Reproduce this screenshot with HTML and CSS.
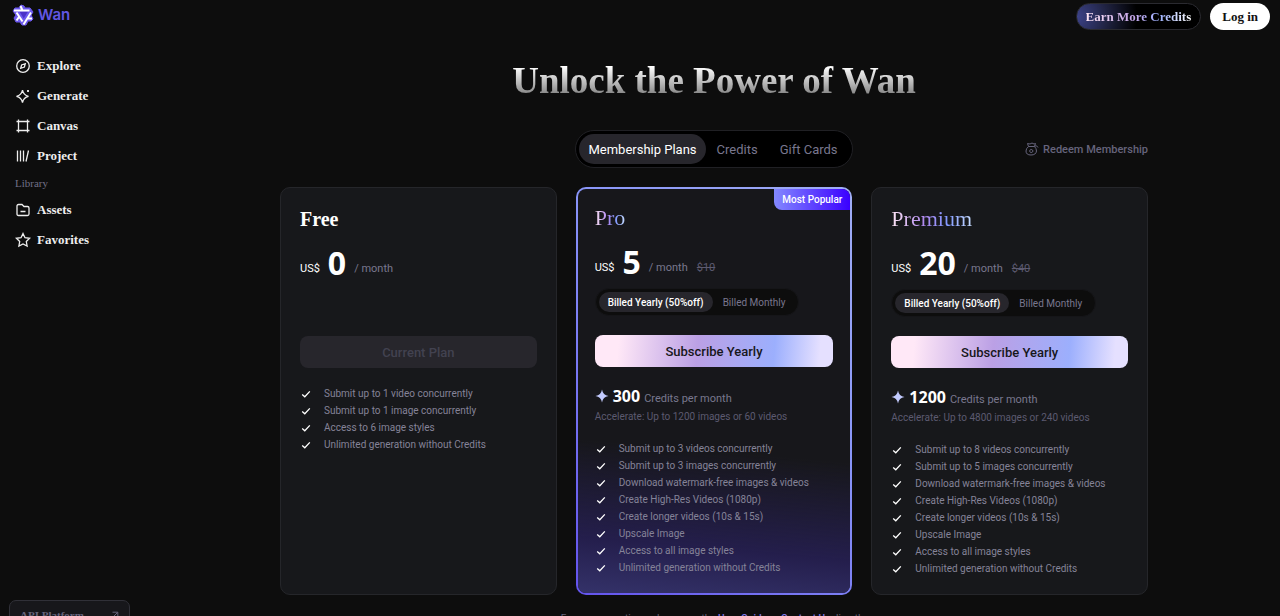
FILE: index.html
```html
<!DOCTYPE html>
<html lang="en">
<head>
    <meta charset="UTF-8">
    <meta name="viewport" content="width=device-width, initial-scale=1.0">
    <title>Wan - Membership</title>
    <link rel="stylesheet" href="styles.css">
</head>
<body>
    <!-- shared icons -->
    <svg class="defs" width="0" height="0">
        <symbol id="check" viewBox="0 0 12 12"><path d="M2.2 6.4 4.8 8.8 9.8 3.4" fill="none" stroke="#fff" stroke-width="1.3"/></symbol>
        <symbol id="spark" viewBox="0 0 14 14"><path d="M7 .5Q7.9 6.1 13.5 7 7.9 7.9 7 13.5 6.1 7.9.5 7 6.1 6.1 7 .5Z" fill="#c3cbff"/></symbol>
    </svg>
    <div class="app">
        <aside class="sidebar">
            <a class="logo" href="#">
                <svg width="24" height="24" viewBox="0 0 24 24" fill="none" stroke-linejoin="round">
                    <path d="M8 5 10 2 13 3 14 5 19 5 22 9 20 12 22 16 20 18 17 18 15 22 11 22 9 19 5 19 3 15 5 12 2 8 4 5Z" fill="#6d59ee" stroke="#6d59ee"/>
                    <path d="M8.500 8.500H17L12.700 15.500Z" fill="#4b32c8"/>
                    <path d="M3 7.500H18.500M9.500 3 11.500 7.500M20 9.500 12.500 21.500M21 15.500H16.500M5.500 9.500 11.500 18.500M5.500 17.500 8 14" stroke="#fff" stroke-width="2"/>
                </svg>
                <span>Wan</span>
            </a>
            <nav class="nav">
                <a href="#">
                    <svg viewBox="0 0 16 16"><circle cx="8" cy="8" r="6.300"/><path d="M10.300 5.700 9.400 9 5.700 10.300 6.600 7Z"/></svg>
                    Explore
                </a>
                <a href="#">
                    <svg viewBox="0 0 16 16"><path d="M7.500 2Q8.500 7.200 13.500 8.300 8.500 9.400 7.500 14.500 6.500 9.400 1.500 8.300 6.500 7.200 7.500 2ZM13 2V4M12 3H14"/></svg>
                    Generate
                </a>
                <a href="#">
                    <svg viewBox="0 0 16 16"><path d="M3.500 1.500V14.500M12.500 1.500V14.500M1.500 3.500H14.500M1.500 12.500H14.500"/></svg>
                    Canvas
                </a>
                <a href="#">
                    <svg viewBox="0 0 16 16"><path d="M2.500 2.500V13.500M5.500 2.500V13.500M8.500 2.500V13.500M13.500 2.500 11 13.500"/></svg>
                    Project
                </a>
                <h2>Library</h2>
                <a href="#">
                    <svg viewBox="0 0 16 16"><path d="M2 4Q2 2.500 3.500 2.500H7L9 4.500H12.500Q14 4.500 14 6V12Q14 13.500 12.500 13.500H3.500Q2 13.500 2 12ZM5.500 9.500H10.500"/></svg>
                    Assets
                </a>
                <a href="#">
                    <svg viewBox="0 0 16 16"><path d="M8 1.600 10 5.700 14.600 6.300 11.300 9.500 12.100 14 8 11.900 3.900 14 4.700 9.500 1.400 6.300 6 5.700Z"/></svg>
                    Favorites
                </a>
            </nav>
            <a class="api" href="#">
                API Platform
                <svg width="8" height="8" viewBox="0 0 8 8"><path d="M1 7 6.500 1.500M1.500 1.200H6.800V6.500" fill="none" stroke="currentColor"/></svg>
            </a>
        </aside>

        <main class="main">
            <header class="topbar">
                <button class="earn"><span>Earn More Credits</span></button>
                <button class="login">Log in</button>
            </header>

            <div class="content">
                <h1>Unlock the Power of Wan</h1>
                <div class="toolbar">
                    <div class="tabs">
                        <button class="active">Membership Plans</button>
                        <button>Credits</button>
                        <button>Gift Cards</button>
                    </div>
                    <a class="redeem" href="#">
                        <svg width="14" height="14" viewBox="0 0 14 14" fill="none" stroke="currentColor"><path d="M3.500 4.500Q1 6.500 1 9 1 13 6 13T11.500 9Q11.500 6.500 9.500 4.500ZM3.500 4.500 2.500 1.500 5 2 7 1 9 2 10.500 1.500 9.500 4.500M9.500 4Q12 3 13 5.500M6.300 7 8.200 9 6.300 11 4.400 9Z"/></svg>
                        Redeem Membership
                    </a>
                </div>

                <div class="plans">
                    <section class="card">
                        <h3>Free</h3>
                        <p class="price"><span>US$</span><strong>0</strong><em>/ month</em></p>
                        <div class="billing_empty"></div>
                        <button class="subscribe" disabled>Current Plan</button>
                        <ul>
                            <li><svg><use href="#check"/></svg>Submit up to 1 video concurrently</li>
                            <li><svg><use href="#check"/></svg>Submit up to 1 image concurrently</li>
                            <li><svg><use href="#check"/></svg>Access to 6 image styles</li>
                            <li><svg><use href="#check"/></svg>Unlimited generation without Credits</li>
                        </ul>
                    </section>

                    <section class="card pro">
                        <span class="badge">Most Popular</span>
                        <h3><span class="tint">Pro</span></h3>
                        <p class="price"><span>US$</span><strong>5</strong><em>/ month</em><del>$10</del></p>
                        <div class="billing">
                            <button class="active">Billed Yearly (50%off)</button>
                            <button>Billed Monthly</button>
                        </div>
                        <button class="subscribe">Subscribe Yearly</button>
                        <p class="credits"><svg><use href="#spark"/></svg><strong>300</strong>Credits per month</p>
                        <p class="accelerate">Accelerate: Up to 1200 images or 60 videos</p>
                        <ul>
                            <li><svg><use href="#check"/></svg>Submit up to 3 videos concurrently</li>
                            <li><svg><use href="#check"/></svg>Submit up to 3 images concurrently</li>
                            <li><svg><use href="#check"/></svg>Download watermark-free images &amp; videos</li>
                            <li><svg><use href="#check"/></svg>Create High-Res Videos (1080p)</li>
                            <li><svg><use href="#check"/></svg>Create longer videos (10s &amp; 15s)</li>
                            <li><svg><use href="#check"/></svg>Upscale Image</li>
                            <li><svg><use href="#check"/></svg>Access to all image styles</li>
                            <li><svg><use href="#check"/></svg>Unlimited generation without Credits</li>
                        </ul>
                    </section>

                    <section class="card">
                        <h3><span class="tint">Premium</span></h3>
                        <p class="price"><span>US$</span><strong>20</strong><em>/ month</em><del>$40</del></p>
                        <div class="billing">
                            <button class="active">Billed Yearly (50%off)</button>
                            <button>Billed Monthly</button>
                        </div>
                        <button class="subscribe">Subscribe Yearly</button>
                        <p class="credits"><svg><use href="#spark"/></svg><strong>1200</strong>Credits per month</p>
                        <p class="accelerate">Accelerate: Up to 4800 images or 240 videos</p>
                        <ul>
                            <li><svg><use href="#check"/></svg>Submit up to 8 videos concurrently</li>
                            <li><svg><use href="#check"/></svg>Submit up to 5 images concurrently</li>
                            <li><svg><use href="#check"/></svg>Download watermark-free images &amp; videos</li>
                            <li><svg><use href="#check"/></svg>Create High-Res Videos (1080p)</li>
                            <li><svg><use href="#check"/></svg>Create longer videos (10s &amp; 15s)</li>
                            <li><svg><use href="#check"/></svg>Upscale Image</li>
                            <li><svg><use href="#check"/></svg>Access to all image styles</li>
                            <li><svg><use href="#check"/></svg>Unlimited generation without Credits</li>
                        </ul>
                    </section>
                </div>

                <p class="help">For more questions, please see the <a href="#">User Guide</a> or <a href="#">Contact Us</a> directly.</p>
            </div>
        </main>
    </div>
</body>
</html>
```
FILE: styles.css
```css
* { box-sizing: border-box; }
body { margin: 0; background: #0d0d0d; color: #fff; font-family: Roboto, "Liberation Sans", sans-serif; font-size: 11px; }
h1, h2, h3, p, ul { margin: 0; padding: 0; }
ul { list-style: none; }
a { color: inherit; text-decoration: none; }
button { border: 0; padding: 0; background: none; color: inherit; font: inherit; cursor: pointer; white-space: nowrap; }
.defs { position: absolute; }

.app { display: flex; height: 100vh; overflow: hidden; }

/* sidebar */
.sidebar { flex: 0 0 148px; padding: 3px 18px 0 9px; font-family: "Liberation Serif", serif; }
.logo { display: flex; align-items: center; gap: 3px; height: 24px; padding-left: 2px; color: #6257e3; font: 600 15px/24px Inter, sans-serif; }
.nav { padding: 24px 0 0 6px; }
.nav a { display: flex; align-items: center; gap: 6px; height: 30px; font-size: 13px; font-weight: bold; color: #eee; }
.nav svg { width: 16px; height: 16px; fill: none; stroke: currentColor; stroke-width: 1.3; }
.nav h2 { height: 24px; font-size: 11px; line-height: 24px; font-weight: normal; color: #727087; }
.api { display: flex; justify-content: space-between; align-items: center; height: 30px; margin-top: 345px; padding: 0 10px; border: 1px solid #303038; border-radius: 7px; background: #17171b; color: #66647c; font-size: 11px; font-weight: bold; }

/* top bar */
.main { flex: 1; min-width: 0; }
.topbar { display: flex; justify-content: flex-end; gap: 9px; padding: 3px 10px 0 0; font-family: "Liberation Serif", serif; font-size: 13px; font-weight: bold; }
.topbar button { height: 27px; border-radius: 14px; }
.earn { padding: 0 9px; border: 1px solid #2a2a30; background: radial-gradient(ellipse 60px 60px at 0 50%, #3c4288, #202342 50%, #000); }
.earn span { background: linear-gradient(90deg, #ffe6f5, #c5a5e8 45%, #9db1ff 70%, #fff); background-clip: text; color: transparent; }
.topbar .login { padding: 0 12px; background: #fff; color: #111; }

/* content */
.content { max-width: 868px; margin: 0 auto; }
h1 { margin-top: 27px; text-align: center; font: bold 37px/48px "Liberation Serif", serif; }
h1 { background: linear-gradient(#fff 20%, #777 85%); background-clip: text; color: transparent; }
.toolbar { display: grid; grid-template-columns: 1fr auto 1fr; align-items: center; margin-top: 25px; }
.tabs { grid-column: 2; display: flex; height: 38px; padding: 3px; border: 1px solid #202024; border-radius: 19px; background: #000; font-size: 13px; color: #79778e; }
.tabs button { padding: 0 11px; border-radius: 15px; }
.tabs .active { padding: 0 9px; background: #27262c; color: #fff; }
.redeem { display: flex; align-items: center; justify-self: end; gap: 4px; color: #66647c; font-size: 11px; font-weight: 500; }

.plans { display: grid; grid-template-columns: repeat(3, 1fr); gap: 19px; margin-top: 19px; }
.card { position: relative; min-height: 408px; padding: 19px 19px 16px; border: 1px solid #25262a; border-radius: 10px; background: #17181b; }
.pro { padding: 17px 17px 16px; border: 2px solid transparent;
    background: linear-gradient(5deg, #343269, #241e4c 13%, rgba(23,23,27,0) 36%) padding-box,
        linear-gradient(#17171b, #17171b) padding-box,
        linear-gradient(45deg, #6353ed, #8995f8 60%, #a0adf5) border-box; }
.badge { position: absolute; top: 0; right: 0; padding: 0 8px; line-height: 21px; border-radius: 0 8px 0 8px; background: linear-gradient(90deg, #8388ff, #3b00ff); font-size: 10px; font-weight: 500; }
h3 { height: 24px; font: bold 20px/24px "Liberation Serif", serif; }
.tint { background: linear-gradient(90deg, #ffe6f5, #b28aef 40%, #8299ff 70%, #c6dcff); background-clip: text; color: transparent; font-size: 22px; font-weight: normal; }
.price { display: flex; align-items: center; height: 40px; margin-top: 12px; color: #79778e; }
.price span, .price em, .price del { margin-top: 10px; }
.price span { color: #fff; }
.price strong { margin: 0 8px; font-family: "Noto Sans", sans-serif; font-size: 32px; line-height: 40px; color: #fff; }
.price em { font-style: normal; }
.price del { margin-left: 9px; color: #5c5a70; }
.billing, .billing_empty { height: 28px; margin-top: 6px; }
.billing { display: flex; width: max-content; padding: 3px; border: 1px solid #151518; border-radius: 14px; background: #0d0d0d; color: #79778e; font-size: 10px; }
.billing button { padding: 0 10px; border-radius: 11px; }
.billing .active { padding: 0 9px; background: #27262c; color: #fff; font-weight: 500; }
.subscribe { display: block; width: 100%; height: 32px; margin-top: 19px; border-radius: 8px; background: linear-gradient(95deg, #ffe8f7 10%, #bba0e5 43%, #9caffd 75%, #e5e0ff 94%); color: #17171b; font-size: 13px; font-weight: 500; }
.subscribe:disabled { background: #27262c; color: #424250; }
.credits { display: flex; align-items: baseline; height: 20px; margin-top: 19px; line-height: 20px; color: #79778e; }
.credits svg { align-self: center; width: 14px; height: 14px; }
.credits strong { margin: 0 4px; font-family: "Noto Sans", sans-serif; font-size: 16px; color: #fff; }
.accelerate { margin-top: 2px; font-size: 10px; line-height: 17px; color: #5c5a70; }
.card ul { margin-top: 15px; font-size: 10px; }
.subscribe + ul { margin-top: 17px; }
.card li { display: flex; align-items: center; gap: 12px; line-height: 17px; color: #858398; }
.card li svg { width: 12px; height: 12px; }
.help { margin-top: 15px; line-height: 17px; text-align: center; color: #66647c; font-size: 10px; }
.help a { color: #8179e8; font-weight: 500; }
```
